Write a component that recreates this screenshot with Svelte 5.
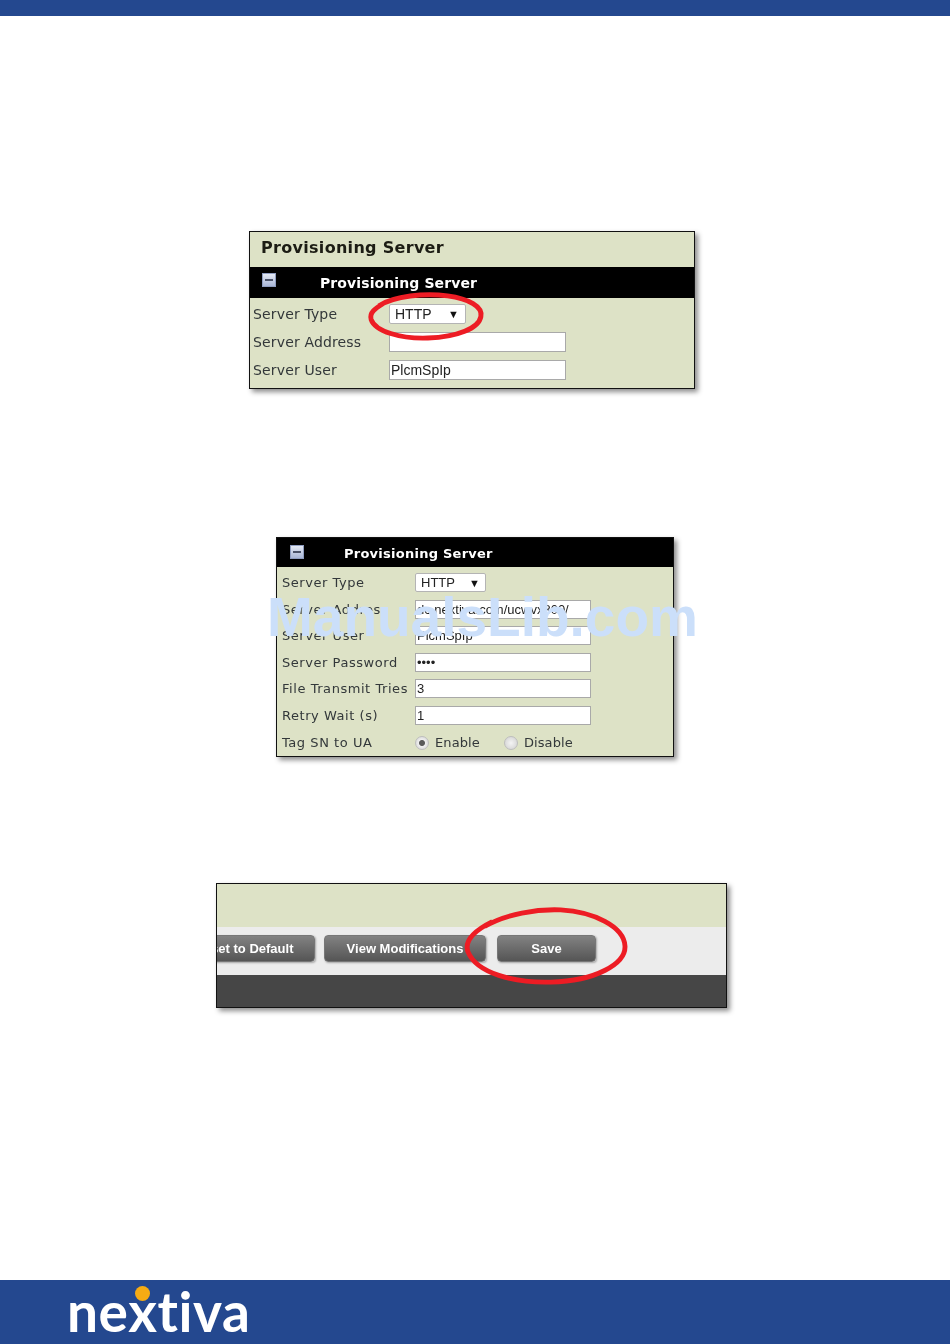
<script lang="ts">
	type Row = { label: string; value: string; type?: string };

	const firstRows: Row[] = [
		{ label: 'Server Address', value: '' },
		{ label: 'Server User', value: 'PlcmSpIp' }
	];

	const secondRows: Row[] = [
		{ label: 'Server Address', value: 'dc.nextiva.com/ucwvx300/' },
		{ label: 'Server User', value: 'PlcmSpIp' },
		{ label: 'Server Password', value: 'abcd', type: 'password' },
		{ label: 'File Transmit Tries', value: '3' },
		{ label: 'Retry Wait (s)', value: '1' }
	];
</script>

<div class="page">
	<div class="top-bar"></div>

	<main class="content">
		<section class="shot shot-one">
			<h2 class="shot-title">Provisioning Server</h2>
			<div class="black-bar">
				<span class="collapse"><i></i></span>
				<span class="bar-title">Provisioning Server</span>
			</div>
			<div class="rows">
				<div class="row">
					<span class="label">Server Type</span>
					<span class="select">HTTP<b>▼</b></span>
				</div>
				{#each firstRows as r}
					<div class="row">
						<span class="label">{r.label}</span>
						<input class="field" value={r.value} readonly />
					</div>
				{/each}
			</div>
			<svg class="circle circle-type" viewBox="0 0 120 50" aria-hidden="true">
				<path d="M12 14 C28 4 58 1 82 4 C104 7 118 15 116 25 C114 37 92 46 62 47 C34 48 8 40 4 28 C2 21 8 17 16 12" />
			</svg>
		</section>

		<section class="shot shot-two">
			<div class="black-bar">
				<span class="collapse"><i></i></span>
				<span class="bar-title">Provisioning Server</span>
			</div>
			<div class="rows">
				<div class="row">
					<span class="label">Server Type</span>
					<span class="select">HTTP<b>▼</b></span>
				</div>
				{#each secondRows as r}
					<div class="row">
						<span class="label">{r.label}</span>
						<input class="field" type={r.type ?? 'text'} value={r.value} readonly />
					</div>
				{/each}
				<div class="row">
					<span class="label">Tag SN to UA</span>
					<span class="radios">
						<label><input type="radio" name="tag" checked />Enable</label>
						<label><input type="radio" name="tag" />Disable</label>
					</span>
				</div>
			</div>
			<div class="watermark">ManualsLib.com</div>
		</section>

		<section class="shot shot-three">
			<div class="green-strip"></div>
			<div class="button-strip">
				<button type="button" class="btn btn-reset">Reset to Default</button>
				<button type="button" class="btn btn-view">View Modifications</button>
				<button type="button" class="btn btn-save">Save</button>
			</div>
			<div class="dark-strip"></div>
			<svg class="circle circle-save" viewBox="0 0 170 80" aria-hidden="true">
				<path d="M22 20 C44 7 76 2 100 3 C134 5 165 20 166 40 C167 58 136 76 90 77 C52 78 14 68 5 46 C1 35 12 24 30 15" />
			</svg>
		</section>
	</main>

	<footer class="footer">
		<div class="logo">
			<span class="logo-text">nextiva</span>
			<span class="logo-dot"></span>
		</div>
	</footer>
</div>

<style>
	:global(body) {
		margin: 0;
		background: #fff;
	}

	.page {
		display: flex;
		flex-direction: column;
		width: 950px;
		height: 1344px;
		overflow: hidden;
		font-family: 'DejaVu Sans', sans-serif;
		color: #33383a;
	}

	.top-bar {
		height: 16px;
		background: #24488f;
	}

	.content {
		flex: 1;
		display: flex;
		flex-direction: column;
		align-items: flex-start;
		padding-top: 215px;
	}

	.shot {
		position: relative;
		box-sizing: border-box;
		background: #dde2c6;
		border: 1px solid #111;
		box-shadow: 3px 3px 5px rgba(0, 0, 0, 0.45);
	}

	.shot-one {
		width: 446px;
		height: 158px;
		margin-left: 249px;
	}

	.shot-two {
		width: 398px;
		height: 220px;
		margin-top: 148px;
		margin-left: 276px;
	}

	.shot-three {
		display: flex;
		flex-direction: column;
		width: 511px;
		height: 125px;
		margin-top: 126px;
		margin-left: 216px;
	}

	/* the originals are upscaled screenshots, so the text is a little soft */
	.shot-title,
	.bar-title,
	.rows,
	.btn {
		filter: blur(0.35px);
	}

	.shot-title {
		margin: 0;
		height: 35px;
		padding-left: 11px;
		font-size: 16px;
		line-height: 31px;
		font-weight: 700;
		letter-spacing: 0.3px;
		color: #1c1c14;
	}

	.black-bar {
		display: flex;
		align-items: center;
		height: 31px;
		background: #000;
	}

	.shot-two .black-bar {
		height: 29px;
	}

	.collapse {
		display: flex;
		align-items: center;
		justify-content: center;
		box-sizing: border-box;
		width: 14px;
		height: 14px;
		margin: -6px 0 0 12px;
		background: linear-gradient(#e4e9f4, #a9b6d6);
		border: 1px solid #8f9dc0;
	}

	.shot-two .collapse {
		margin: -2px 0 0 13px;
	}

	.collapse i {
		width: 8px;
		height: 2px;
		background: #4a5268;
	}

	.bar-title {
		margin-left: 44px;
		margin-top: 1px;
		font-size: 14px;
		font-weight: 700;
		letter-spacing: 0.1px;
		color: #fff;
	}

	.shot-two .bar-title {
		font-size: 13px;
		margin-left: 40px;
		letter-spacing: 0.25px;
	}

	.rows {
		display: flex;
		flex-direction: column;
		padding: 6px 0 0 3px;
		gap: 8px;
	}

	.shot-two .rows {
		padding: 6px 0 0 5px;
		gap: 7.6px;
	}

	.row {
		display: flex;
		align-items: center;
		height: 20px;
		font-size: 14px;
	}

	.shot-two .row {
		height: 19px;
		font-size: 13px;
	}

	.label {
		width: 136px;
		flex-shrink: 0;
		white-space: nowrap;
		letter-spacing: 0.15px;
	}

	.shot-two .label {
		width: 133px;
		letter-spacing: 0.55px;
	}

	.select {
		display: flex;
		align-items: center;
		justify-content: space-between;
		box-sizing: border-box;
		width: 77px;
		height: 20px;
		padding: 0 6px 0 5px;
		background: #fff;
		border: 1px solid #b4b4b4;
		border-radius: 2px;
		font-family: 'Liberation Sans', sans-serif;
		font-size: 14px;
		color: #222;
	}

	.select b {
		font-size: 11px;
		font-weight: 400;
		color: #111;
	}

	.field {
		box-sizing: border-box;
		width: 177px;
		height: 20px;
		margin: 0;
		padding: 0 1px;
		background: #fff;
		border: 1px solid #a9a9a9;
		border-radius: 0;
		outline: none;
		font-family: 'Liberation Sans', sans-serif;
		font-size: 14px;
		color: #222;
	}

	.shot-two .field {
		width: 176px;
		height: 19px;
		font-size: 13px;
	}

	.shot-two .select {
		width: 71px;
		height: 19px;
		padding-right: 5px;
		font-size: 13px;
	}

	.radios {
		display: flex;
		gap: 24px;
		margin-top: 1px;
		letter-spacing: 0.1px;
	}

	.radios label {
		display: flex;
		align-items: center;
		gap: 6px;
	}

	.radios input {
		appearance: none;
		-webkit-appearance: none;
		box-sizing: border-box;
		width: 14px;
		height: 14px;
		margin: 0;
		border-radius: 50%;
		border: 1px solid #bdbdbd;
		background: radial-gradient(circle, #f4f4f4, #cfcfcf);
	}

	.radios input:checked {
		background: radial-gradient(circle, #5a5a5a 0 2.5px, #eee 3.5px, #d0d0d0 100%);
	}

	.circle {
		position: absolute;
		overflow: visible;
		fill: none;
		stroke: #ed1c24;
		stroke-width: 5;
		pointer-events: none;
	}

	.circle-type {
		left: 114px;
		top: 60px;
		width: 124px;
		height: 49px;
	}

	.circle-save {
		left: 241px;
		top: 23px;
		width: 176px;
		height: 78px;
	}

	.watermark {
		position: absolute;
		left: -10px;
		top: 49px;
		font-family: 'Liberation Sans', sans-serif;
		font-size: 55px;
		line-height: 60px;
		font-weight: 700;
		white-space: nowrap;
		color: #cbdffa;
	}

	.green-strip {
		height: 43px;
		background: #dde2c6;
	}

	.button-strip {
		display: flex;
		justify-content: flex-end;
		align-items: flex-start;
		gap: 9px;
		height: 48px;
		padding: 8px 130px 0 0;
		box-sizing: border-box;
		background: #ececec;
		overflow: hidden;
	}

	.btn {
		flex-shrink: 0;
		height: 27px;
		padding: 0;
		background: linear-gradient(#828282, #555);
		border: 1px solid #777;
		border-radius: 4px;
		box-shadow: 1px 1px 2px rgba(0, 0, 0, 0.3);
		font-family: 'Liberation Sans', sans-serif;
		font-size: 13px;
		font-weight: 700;
		color: #fff;
	}

	.btn-reset {
		width: 142px;
	}

	.btn-view {
		width: 162px;
	}

	.btn-save {
		width: 99px;
		margin-left: 2px;
	}

	.dark-strip {
		flex: 1;
		background: #464646;
	}

	.footer {
		height: 64px;
		background: #24488f;
	}

	.logo {
		position: relative;
		margin-left: 67px;
		width: 190px;
		height: 64px;
	}

	.logo-text {
		display: block;
		font-family: 'Lato', sans-serif;
		font-size: 55px;
		line-height: 64px;
		font-weight: 700;
		letter-spacing: 0.6px;
		font-variant-ligatures: none;
		color: #fff;
		transform: translateY(-1px);
	}

	.logo-dot {
		position: absolute;
		left: 68px;
		top: 6px;
		width: 15px;
		height: 15px;
		border-radius: 50%;
		background: #f5ab14;
	}
</style>
